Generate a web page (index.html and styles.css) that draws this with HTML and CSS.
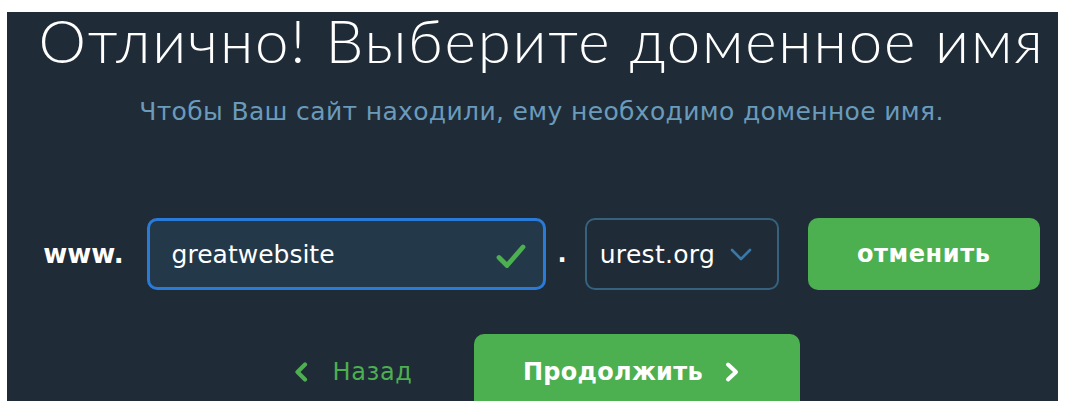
FILE: index.html
```html
<!DOCTYPE html>
<html lang="ru">
<head>
<meta charset="utf-8">
<title>Выбор домена</title>
<link rel="stylesheet" href="styles.css">
</head>
<body>
<main class="panel">
  <h1 class="title">Отлично! Выберите доменное имя</h1>
  <p class="subtitle">Чтобы Ваш сайт находили, ему необходимо доменное имя.</p>

  <div class="domain-row">
    <span class="prefix">www.</span>
    <div class="name-field">
      <span class="name-value">greatwebsite</span>
      <svg class="check" width="30" height="26" viewBox="0 0 30 26" aria-hidden="true">
        <path d="M3 14.5 L11 22.5 L27 4" fill="none" stroke="#4caf50" stroke-width="4.8" stroke-linecap="round" stroke-linejoin="round"/>
      </svg>
    </div>
    <span class="dot">.</span>
    <div class="zone-select">
      <span class="zone-value">urest.org</span>
      <svg class="caret" width="22" height="13" viewBox="0 0 22 13" aria-hidden="true">
        <path d="M2 2 L11 11 L20 2" fill="none" stroke="#3a78a8" stroke-width="2.6" stroke-linecap="round" stroke-linejoin="round"/>
      </svg>
    </div>
    <button class="btn btn-cancel" type="button">отменить</button>
  </div>

  <div class="nav-row">
    <a class="back-link" href="#">
      <svg width="16" height="20" viewBox="0 0 16 20" aria-hidden="true">
        <path d="M12 2.5 L4.5 10 L12 17.5" fill="none" stroke="#4caf50" stroke-width="4.2" stroke-linecap="round" stroke-linejoin="round"/>
      </svg>
      <span>Назад</span>
    </a>
    <button class="btn btn-next" type="button">
      <span>Продолжить</span>
      <svg width="17" height="22" viewBox="0 0 17 22" aria-hidden="true">
        <path d="M3 3.5 L11 11 L3 18.5" fill="none" stroke="#ffffff" stroke-width="4" stroke-linecap="round" stroke-linejoin="round"/>
      </svg>
    </button>
  </div>
</main>
</body>
</html>
```

FILE: styles.css
```css
html, body {
  margin: 0;
  padding: 0;
  background: #ffffff;
  overflow: hidden;
  height: 100%;
}

.panel {
  margin: 12px 8px 0 7px;
  min-height: 420px;
  background: #1f2b37;
  padding: 0 0 0 18px;
  box-sizing: border-box;
  display: flex;
  flex-direction: column;
  align-items: center;
  font-family: "DejaVu Sans", Verdana, sans-serif;
}

.title {
  margin: 0;
  font-family: "Lato", "Open Sans", sans-serif;
  font-weight: 300;
  font-size: 60px;
  line-height: 56px;
  color: #ffffff;
  letter-spacing: 1.8px;
  white-space: nowrap;
}

.subtitle {
  margin: 29px 0 0;
  font-size: 25px;
  line-height: 30px;
  letter-spacing: 0.35px;
  color: #6a9bbb;
  white-space: nowrap;
}

.domain-row {
  margin-top: 91px;
  display: flex;
  align-items: center;
  height: 72px;
  flex-shrink: 0;
}

.prefix {
  font-weight: bold;
  font-size: 26px;
  color: #ffffff;
  margin-right: 23px;
}

.name-field {
  width: 399px;
  height: 72px;
  box-sizing: border-box;
  border: 3px solid #2a7ad8;
  border-radius: 10px;
  background: #233849;
  display: flex;
  align-items: center;
  justify-content: space-between;
  padding: 0 17px 0 22px;
}

.name-value {
  font-size: 25px;
  color: #ffffff;
}

.check {
  margin-top: 4px;
}

.dot {
  font-weight: bold;
  font-size: 24px;
  color: #ffffff;
  margin: 0 18px 0 12px;
}

.zone-select {
  width: 194px;
  height: 72px;
  box-sizing: border-box;
  border: 2px solid #36627e;
  border-radius: 10px;
  display: flex;
  align-items: center;
  justify-content: space-between;
  padding: 0 25px 0 13px;
}

.zone-value {
  font-size: 25px;
  letter-spacing: 0.3px;
  color: #ffffff;
}

.btn {
  border: 0;
  background: #4caf50;
  color: #ffffff;
  border-radius: 10px;
  font-family: "DejaVu Sans", Verdana, sans-serif;
  font-weight: bold;
  cursor: pointer;
}

.btn-cancel {
  margin-left: 29px;
  width: 232px;
  height: 72px;
  font-size: 24px;
  letter-spacing: 0.6px;
}

.nav-row {
  margin-top: 44px;
  display: flex;
  align-items: flex-start;
  margin-left: 10px;
  flex-shrink: 0;
}

.back-link {
  display: flex;
  align-items: center;
  gap: 24px;
  color: #4caf50;
  text-decoration: none;
  font-size: 24px;
  letter-spacing: 0.6px;
  height: 76px;
}

.btn-next {
  margin-left: 62px;
  width: 326px;
  height: 80px;
  display: flex;
  align-items: center;
  justify-content: center;
  gap: 22px;
  font-size: 24px;
  letter-spacing: 0.3px;
  padding: 0 10px 4px 0;
}
```
